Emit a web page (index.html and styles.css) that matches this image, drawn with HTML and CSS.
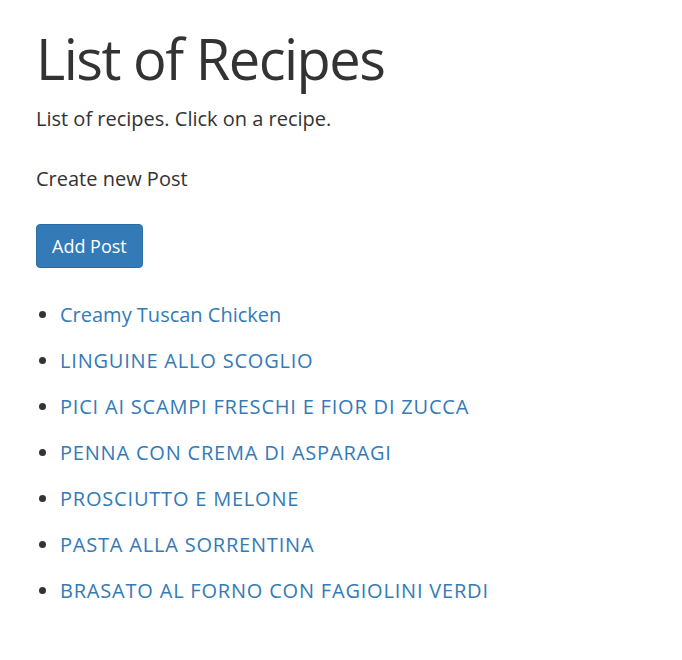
FILE: index.html
```html
<!DOCTYPE html>
<html lang="en">
<head>
<meta charset="utf-8">
<title>List of Recipes</title>
<link rel="stylesheet" href="styles.css">
</head>
<body>
<main class="page">
  <h1 class="title">List of Recipes</h1>
  <p class="lead">List of recipes. Click on a recipe.</p>
  <p class="create">Create new Post</p>
  <a class="btn" href="#">Add Post</a>
  <ul class="recipes">
    <li><a class="recipe" href="#">Creamy Tuscan Chicken</a></li>
    <li><a class="recipe caps" href="#">LINGUINE ALLO SCOGLIO</a></li>
    <li><a class="recipe caps" href="#">PICI AI SCAMPI FRESCHI E FIOR DI ZUCCA</a></li>
    <li><a class="recipe caps" href="#">PENNA CON CREMA DI ASPARAGI</a></li>
    <li><a class="recipe caps" href="#">PROSCIUTTO E MELONE</a></li>
    <li><a class="recipe caps" href="#">PASTA ALLA SORRENTINA</a></li>
    <li><a class="recipe caps" href="#">BRASATO AL FORNO CON FAGIOLINI VERDI</a></li>
  </ul>
</main>
</body>
</html>
```
FILE: styles.css
```css
html, body {
  margin: 0;
  padding: 0;
  background: #ffffff;
}
body {
  font-family: "Open Sans", "Noto Sans", sans-serif;
  color: #333333;
  font-size: 20px;
}
.page {
  padding: 18px 36px;
}
.title {
  margin: 0;
  font-size: 56px;
  font-weight: 400;
  line-height: 80px;
  letter-spacing: -1.5px;
}
.lead {
  margin: 7px 0 0;
  line-height: 28px;
}
.create {
  margin: 32px 0 0;
  line-height: 28px;
}
.btn {
  display: inline-block;
  margin-top: 31px;
  box-sizing: border-box;
  height: 44px;
  padding: 0 15px;
  font-size: 18px;
  line-height: 42px;
  color: #ffffff;
  background: #337ab7;
  border: 1px solid #2e6da4;
  border-radius: 4px;
  text-decoration: none;
}
.recipes {
  margin: 33px 0 0;
  padding-left: 24px;
}
.recipes li {
  line-height: 28px;
  margin-bottom: 18px;
}
.recipe {
  color: #337ab7;
  text-decoration: none;
}
.recipe.caps {
  letter-spacing: 0.8px;
}
```
